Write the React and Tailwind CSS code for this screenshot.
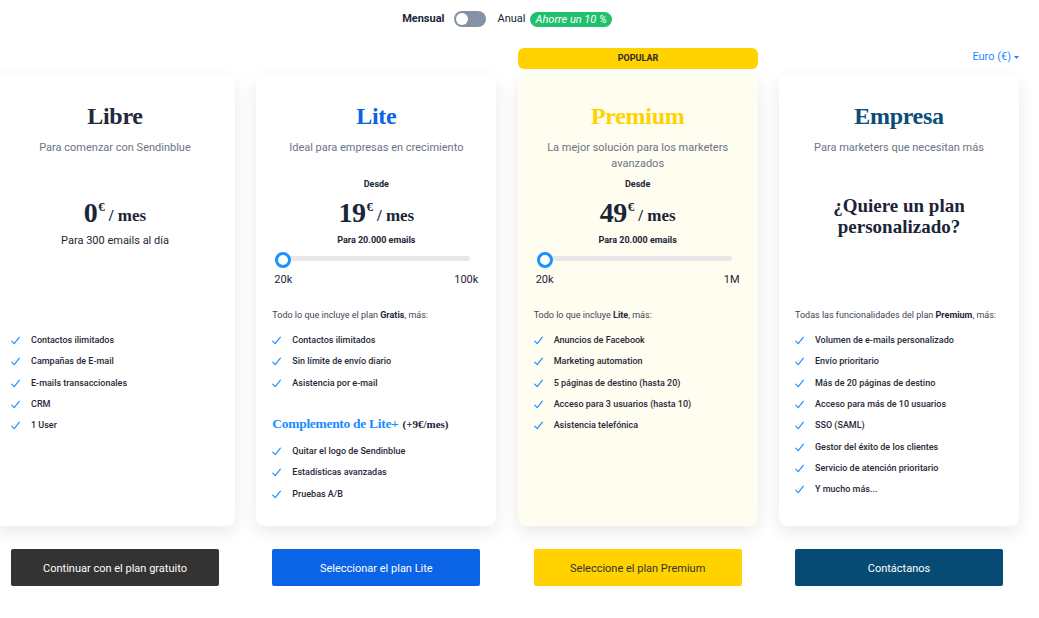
import React from "react";

const serif = { fontFamily: '"Liberation Serif", "Times New Roman", serif' };

function Check() {
  return (
    <svg width="9" height="9" viewBox="0 0 10 9" className="shrink-0">
      <path d="M0.8 5.2 L3.6 8 L9.3 0.8" fill="none" stroke="#1a92ff" strokeWidth="1.3" strokeLinecap="round" strokeLinejoin="round" />
    </svg>
  );
}

function Features({ items }) {
  return (
    <ul className="flex flex-col">
      {items.map((t) => (
        <li key={t} className="h-[21.33px] flex items-center gap-[11px] text-[9px] font-medium text-[#1f2937]">
          <Check />
          <span>{t}</span>
        </li>
      ))}
    </ul>
  );
}

function Slider() {
  return (
    <div className="mt-[6px] h-[16px] relative flex items-center ml-[3px] mr-[10px]">
      <div className="h-[5px] w-full rounded-full bg-[#e8e8e8]" />
      <div className="absolute left-0 top-0 w-[16px] h-[16px] rounded-full border-[3px] border-[#1a92ff] bg-white" />
    </div>
  );
}

function Price({ value }) {
  return (
    <div className="h-[30px] flex items-center justify-center text-[#1b2538]" style={serif}>
      <span className="text-[28px] font-bold leading-none tracking-[-0.5px]">{value}</span>
      <span className="text-[13px] font-bold leading-none self-start mt-[2px] ml-[1px]">€</span>
      <span className="text-[17px] font-bold leading-none ml-[4px] mt-[4px]">/ mes</span>
    </div>
  );
}

function Card({ title, titleColor, subtitle, middle, header, features, extra, bg = "bg-white" }) {
  return (
    <div className={`w-[240px] h-[451px] rounded-lg ${bg} shadow-[0_6px_18px_rgba(0,0,0,0.09)] px-4 pt-[26px] flex flex-col`}>
      <div className={`h-[30px] leading-[30px] text-center text-[24px] font-bold tracking-[-0.3px] ${titleColor}`} style={serif}>
        {title}
      </div>
      <div className="mt-[9px] h-[32px] text-center text-[11px] leading-[16px] text-[#6b7483] px-2">{subtitle}</div>
      <div className="h-[115px] flex flex-col">{middle}</div>
      <div className="mt-[22px] h-[12px] leading-[12px] text-[9px] text-[#3d4653]">{header}</div>
      <div className="mt-[9px]">
        <Features items={features} />
      </div>
      {extra}
    </div>
  );
}

function PaidMiddle({ value, max }) {
  return (
    <>
      <div className="mt-[6px] h-[12px] leading-[12px] text-center text-[9px] font-bold text-[#1b2538]">Desde</div>
      <div className="mt-[8px]">
        <Price value={value} />
      </div>
      <div className="mt-[6px] h-[12px] leading-[12px] text-center text-[9px] font-bold text-[#1b2538]">Para 20.000 emails</div>
      <Slider />
      <div className="mt-[8px] h-[14px] leading-[14px] flex justify-between px-[2px] text-[11px] text-[#1b2538]">
        <span>20k</span>
        <span>{max}</span>
      </div>
    </>
  );
}

export default function App() {
  return (
    <div className="w-[1039px] h-[618px] bg-white overflow-hidden" style={{ fontFamily: 'Roboto, "Liberation Sans", Arial, sans-serif' }}>
      <div className="w-[1024px] ml-[-5px]">
        <div className="h-[37px] flex items-center justify-center pt-[1px]">
          <span className="text-[11px] font-bold text-[#1b2538]">Mensual</span>
          <div className="ml-[10px] w-[32px] h-[16px] rounded-full bg-[#8592a6] flex items-center px-[2px]">
            <div className="w-[12px] h-[12px] rounded-full bg-white" />
          </div>
          <span className="ml-[11px] text-[11px] text-[#1b2538]">Anual</span>
          <span className="ml-[5px] h-[15px] px-[5px] rounded-full bg-[#1fc16b] text-white text-[11px] italic leading-[15px]">Ahorre un 10 %</span>
        </div>
        <div className="h-[38px] flex items-start">
          <div className="w-[523px]" />
          <div className="mt-[11px] w-[240px] h-[21px] rounded-md bg-[#ffd200] flex items-center justify-center text-[9px] font-bold text-[#2b2b2b] pt-[1px]">
            POPULAR
          </div>
          <div className="flex-1 flex justify-end mt-[12px]">
            <span className="text-[11px] text-[#1a8cff] flex items-center gap-[3px]">
              Euro (€)
              <svg width="5" height="3" viewBox="0 0 5 3"><path d="M0 0 L5 0 L2.5 3 Z" fill="#1a8cff" /></svg>
            </span>
          </div>
        </div>
        <div className="flex gap-[21.33px]">
          <Card
            title="Libre"
            titleColor="text-[#1e2a3a]"
            subtitle="Para comenzar con Sendinblue"
            middle={
              <>
                <div className="mt-[26px]">
                  <Price value="0" />
                </div>
                <div className="mt-[6px] h-[14px] leading-[14px] text-center text-[11px] text-[#1b2538]">Para 300 emails al día</div>
              </>
            }
            header=""
            features={["Contactos ilimitados", "Campañas de E-mail", "E-mails transaccionales", "CRM", "1 User"]}
          />
          <Card
            title="Lite"
            titleColor="text-[#0b63e5]"
            subtitle="Ideal para empresas en crecimiento"
            middle={<PaidMiddle value="19" max="100k" />}
            header={<>Todo lo que incluye el plan <b className="text-[#1b2538]">Gratis</b>, más:</>}
            features={["Contactos ilimitados", "Sin límite de envío diario", "Asistencia por e-mail"]}
            extra={
              <>
                <div className="mt-[21px] h-[18px] leading-[18px] flex items-baseline" style={serif}>
                  <span className="text-[13.5px] font-bold text-[#1a8cff] tracking-[-0.3px]">Complemento de Lite+</span>
                  <span className="ml-[4px] text-[11px] font-bold text-[#1b2538]">(+9€/mes)</span>
                </div>
                <div className="mt-[8px]">
                  <Features items={["Quitar el logo de Sendinblue", "Estadísticas avanzadas", "Pruebas A/B"]} />
                </div>
              </>
            }
          />
          <Card
            title="Premium"
            titleColor="text-[#ffd200]"
            bg="bg-[#fffcf0]"
            subtitle="La mejor solución para los marketers avanzados"
            middle={<PaidMiddle value="49" max="1M" />}
            header={<>Todo lo que incluye <b className="text-[#1b2538]">Lite</b>, más:</>}
            features={["Anuncios de Facebook", "Marketing automation", "5 páginas de destino (hasta 20)", "Acceso para 3 usuarios (hasta 10)", "Asistencia telefónica"]}
          />
          <Card
            title="Empresa"
            titleColor="text-[#0b4d78]"
            subtitle="Para marketers que necesitan más"
            middle={
              <div className="pt-[23px] text-center text-[19px] font-bold leading-[21px] text-[#1b2538] px-4" style={serif}>
                ¿Quiere un plan personalizado?
              </div>
            }
            header={<>Todas las funcionalidades del plan <b className="text-[#1b2538]">Premium</b>, más:</>}
            features={[
              "Volumen de e-mails personalizado",
              "Envío prioritario",
              "Más de 20 páginas de destino",
              "Acceso para más de 10 usuarios",
              "SSO (SAML)",
              "Gestor del éxito de los clientes",
              "Servicio de atención prioritario",
              "Y mucho más...",
            ]}
          />
        </div>
        <div className="mt-[23px] flex gap-[21.33px]">
          {[
            ["Continuar con el plan gratuito", "bg-[#333333] text-white"],
            ["Seleccionar el plan Lite", "bg-[#0b63e5] text-white"],
            ["Seleccione el plan Premium", "bg-[#ffd200] text-[#333333]"],
            ["Contáctanos", "bg-[#074b74] text-white"],
          ].map(([t, c]) => (
            <div key={t} className="w-[240px] px-4">
              <div className={`h-[37px] rounded-[2px] flex items-center justify-center pt-[3px] text-[11px] ${c}`}>{t}</div>
            </div>
          ))}
        </div>
      </div>
    </div>
  );
}
